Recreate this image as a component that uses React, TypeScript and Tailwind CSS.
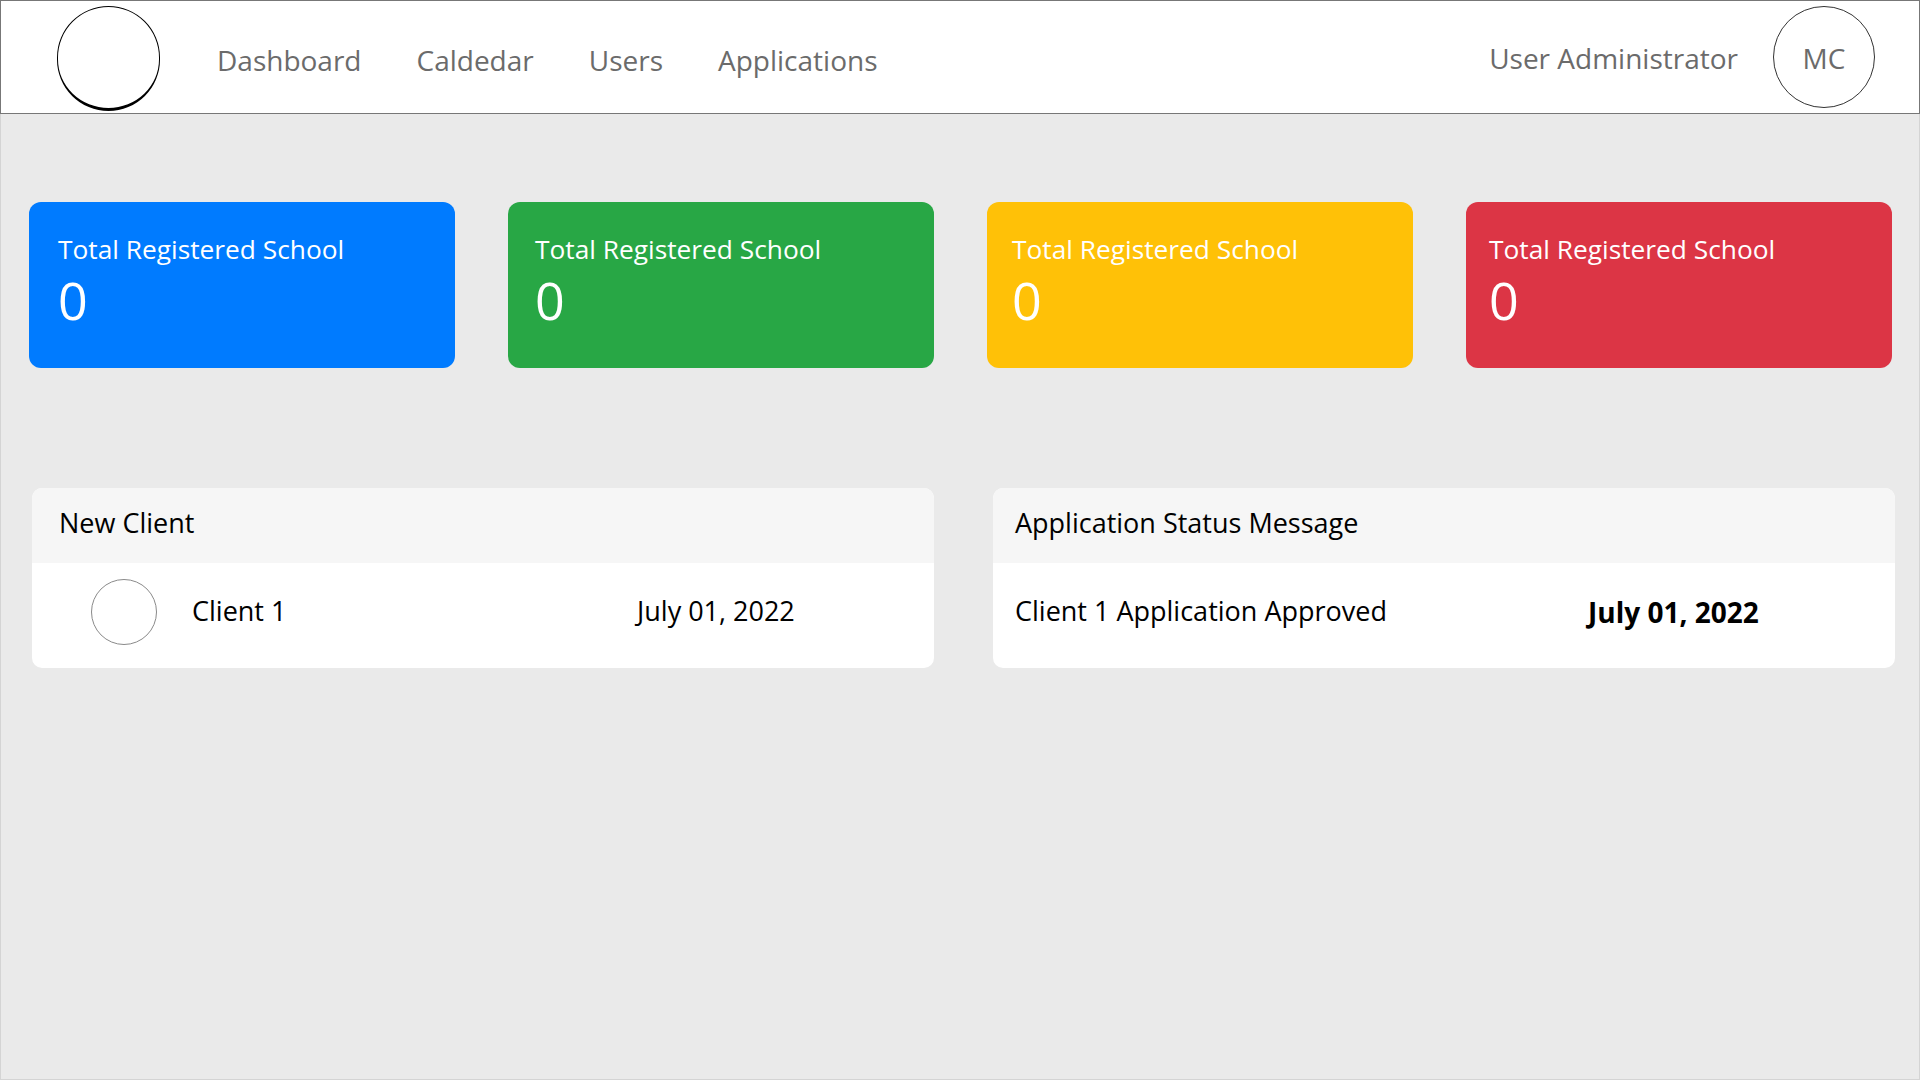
import React from "react";

const font = { fontFamily: '"Open Sans", "Noto Sans", sans-serif' };

function StatCard({ color, pad }: { color: string; pad: string }) {
  return (
    <div className={`h-[166px] rounded-[12px] pt-[28px] text-white ${color} ${pad}`}>
      <div className="text-[26.3px] leading-[39px]">Total Registered School</div>
      <div className="text-[52px] leading-[62px]">0</div>
    </div>
  );
}

export default function App() {
  return (
    <div className="min-h-screen flex flex-col bg-[#eaeaea] text-black" style={font}>
      <nav className="h-[114px] shrink-0 border border-[#777777] bg-white flex items-center pl-[56px] pr-[44px]">
        <div className="w-[103px] h-[105px] mt-[2px] rounded-full border border-black border-b-[3px]" />
        <ul className="flex ml-[57px] gap-[55px] text-[28px] text-[#6b6b6b] pt-[6px]">
          <li>Dashboard</li>
          <li>Caldedar</li>
          <li>Users</li>
          <li>Applications</li>
        </ul>
        <div className="ml-auto flex items-center text-[28px] text-[#6b6b6b]">
          <span className="pt-[2px]">User Administrator</span>
          <div className="ml-[35px] w-[102px] h-[102px] rounded-full border border-[#333333] flex items-center justify-center pt-[2px]">
            MC
          </div>
        </div>
      </nav>
      <main className="flex-1 border-x border-b border-[#d4d4d4]">
        <div className="grid grid-cols-4 gap-[53px] pl-[28px] pr-[27px] pt-[88px]">
          <StatCard color="bg-[#007bff]" pad="pl-[29px]" />
          <StatCard color="bg-[#28a745]" pad="pl-[27px]" />
          <StatCard color="bg-[#ffc107]" pad="pl-[25px]" />
          <StatCard color="bg-[#dc3545]" pad="pl-[23px]" />
        </div>
        <div className="grid grid-cols-2 gap-[59px] pl-[31px] pr-[24px] pt-[120px]">
          <div className="rounded-[10px] overflow-hidden bg-white">
            <div className="h-[75px] bg-[#f6f6f6] flex items-center pl-[27px] pb-[4px] text-[27px]">New Client</div>
            <div className="h-[105px] flex items-center pl-[59px] pb-[8px] text-[27px]">
              <div className="w-[66px] h-[66px] rounded-full border border-[#8a8a8a] shrink-0" />
              <div className="ml-[35px] w-[445px]">Client 1</div>
              <div>July 01, 2022</div>
            </div>
          </div>
          <div className="rounded-[10px] overflow-hidden bg-white">
            <div className="h-[75px] bg-[#f6f6f6] flex items-center pl-[22px] pb-[4px] text-[27px]">Application Status Message</div>
            <div className="h-[105px] flex items-center pl-[22px] pb-[8px] text-[27px]">
              <div className="w-[573px]">Client 1 Application Approved</div>
              <div className="font-bold text-[28px]">July 01, 2022</div>
            </div>
          </div>
        </div>
      </main>
    </div>
  );
}
